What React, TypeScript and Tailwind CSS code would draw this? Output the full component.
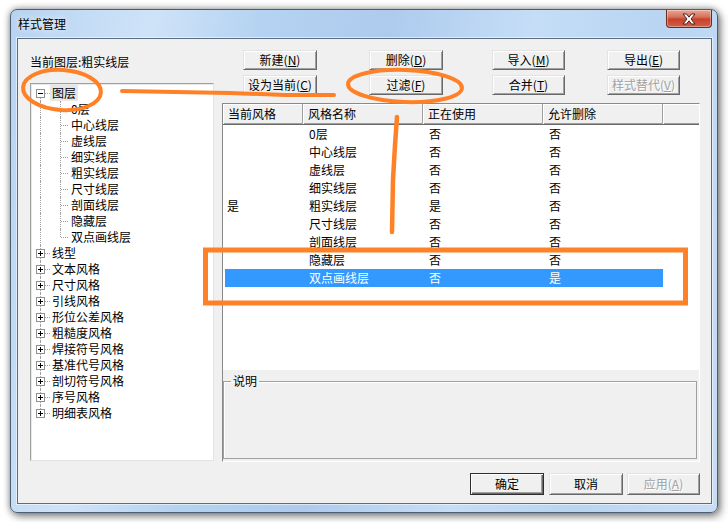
import React from 'react';

const layers = ['0层', '中心线层', '虚线层', '细实线层', '粗实线层', '尺寸线层', '剖面线层', '隐藏层', '双点画线层'];
const roots = ['线型', '文本风格', '尺寸风格', '引线风格', '形位公差风格', '粗糙度风格', '焊接符号风格', '基准代号风格', '剖切符号风格', '序号风格', '明细表风格'];

const rows = [
  { cur: '', name: '0层', used: '否', del: '否' },
  { cur: '', name: '中心线层', used: '否', del: '否' },
  { cur: '', name: '虚线层', used: '否', del: '否' },
  { cur: '', name: '细实线层', used: '否', del: '否' },
  { cur: '是', name: '粗实线层', used: '是', del: '否' },
  { cur: '', name: '尺寸线层', used: '否', del: '否' },
  { cur: '', name: '剖面线层', used: '否', del: '否' },
  { cur: '', name: '隐藏层', used: '否', del: '否' },
  { cur: '', name: '双点画线层', used: '否', del: '是', sel: true },
];

function PlusBox({ open }: { open?: boolean }) {
  return (
    <svg width="9" height="9" viewBox="0 0 9 9" className="block">
      <rect x="0.5" y="0.5" width="8" height="8" fill="#fff" stroke="#919191" />
      <line x1="2" y1="4.5" x2="7" y2="4.5" stroke="#000" />
      {!open && <line x1="4.5" y1="2" x2="4.5" y2="7" stroke="#000" />}
    </svg>
  );
}

function RootRow({ label, first, last, open, selected }: { label: string; first?: boolean; last?: boolean; open?: boolean; selected?: boolean }) {
  return (
    <div className="flex h-4 items-center">
      <div className="relative h-4 w-[19px] shrink-0">
        <span
          className={`absolute left-[9px] w-0 border-l border-dotted border-[#a0a0a0] ${
            first ? 'top-2 bottom-0' : last ? 'top-0 h-2' : 'top-0 bottom-0'
          }`}
        />
        <span className="absolute left-[14px] top-2 w-[5px] border-t border-dotted border-[#a0a0a0]" />
        <span className="absolute left-[5px] top-1">
          <PlusBox open={open} />
        </span>
      </div>
      <span className={`px-[2px] leading-4 ${selected ? 'bg-[#e6e6e6]' : ''}`}>{label}</span>
    </div>
  );
}

function ChildRow({ label, last }: { label: string; last?: boolean }) {
  return (
    <div className="flex h-4 items-center">
      <div className="relative h-4 w-[19px] shrink-0">
        <span className="absolute left-[9px] top-0 bottom-0 w-0 border-l border-dotted border-[#a0a0a0]" />
      </div>
      <div className="relative h-4 w-[19px] shrink-0">
        <span className={`absolute left-[10px] top-0 w-0 border-l border-dotted border-[#a0a0a0] ${last ? 'h-2' : 'bottom-0'}`} />
        <span className="absolute left-[11px] top-2 w-[7px] border-t border-dotted border-[#a0a0a0]" />
      </div>
      <span className="px-[2px] leading-4">{label}</span>
    </div>
  );
}

function Btn({ text, k, disabled, def, className = '' }: { text: string; k?: string; disabled?: boolean; def?: boolean; className?: string }) {
  const frame = def
    ? 'border border-[#2e2e2e] shadow-[inset_1px_1px_0_#fff,inset_-1px_-1px_0_#696969,inset_-2px_-2px_0_#a0a0a0]'
    : 'border border-t-[#e3e3e3] border-l-[#e3e3e3] border-r-[#696969] border-b-[#696969] shadow-[inset_1px_1px_0_#fff,inset_-1px_-1px_0_#a0a0a0]';
  return (
    <div
      className={`flex items-center justify-center bg-[#f0f0f0] text-[12px] leading-4 ${frame} ${
        disabled ? 'text-[#a0a0a0] [text-shadow:1px_1px_0_#fff]' : 'text-black'
      } ${className}`}
    >
      <span>
        {text}
        {k && (
          <>
            (<span className="underline underline-offset-1">{k}</span>)
          </>
        )}
      </span>
    </div>
  );
}

const cols = ['w-[80px]', 'w-[120px]', 'w-[120px]', 'w-[120px]'];

export default function App() {
  return (
    <div className="relative h-[522px] w-[728px] overflow-hidden bg-white pl-[10px] pt-[9px] font-['Noto_Sans_CJK_SC',sans-serif] text-[12px] text-black">
      {/* window */}
      <div className="flex h-[504px] w-[708px] flex-col rounded-[7px] border border-[#4c5e74] bg-[linear-gradient(100deg,#b7d3f1_0%,#cfe3f8_18%,#b4d2f1_32%,#aecbee_48%,#c5ddf6_66%,#b9d5f2_82%,#c9def5_100%)] px-[6px] pr-[5px] shadow-[0_0_7px_rgba(0,0,0,0.45),3px_4px_9px_rgba(0,0,0,0.35)]">
        {/* title bar */}
        <div className="flex h-[28px] shrink-0 items-start">
          <div className="flex h-full flex-1 items-center pl-[1px] text-[12px] text-black [text-shadow:0_0_6px_#fff]">样式管理</div>
          <div className="flex h-[18px] w-[46px] items-center justify-center rounded-b-[4px] border border-t-0 border-[#6e2a22] bg-[linear-gradient(#e9a797_0%,#d7735d_40%,#c8412b_55%,#d0604a_100%)] shadow-[inset_0_0_0_1px_rgba(255,255,255,0.35)]">
            <svg width="14" height="12" viewBox="0 0 14 12">
              <path d="M1 1h3.5L7 4.2 9.5 1H13L9 6l4 5H9.5L7 7.8 4.5 11H1l4-5z" fill="#fff" stroke="#4a2420" strokeWidth="1" strokeLinejoin="round" />
            </svg>
          </div>
        </div>

        {/* client */}
        <div className="flex h-[466px] w-[695px] flex-col border border-[#5c6d82] bg-[#f0f0f0] pl-[12px] pr-[10px] shadow-[0_0_0_1px_rgba(255,255,255,0.55)]">
          <div className="flex gap-[8px]">
            {/* left column */}
            <div className="flex w-[184px] flex-col pt-[15px]">
              <div className="h-4 leading-4">当前图层:粗实线层</div>
              <div className="mt-[13px] h-[378px] border border-t-[#a0a0a0] border-l-[#a0a0a0] border-r-[#e3e3e3] border-b-[#e3e3e3] bg-white pt-[1px] shadow-[inset_1px_1px_0_#e8e8e8]">
                <RootRow label="图层" first open selected />
                {layers.map((l, i) => (
                  <ChildRow key={l} label={l} last={i === layers.length - 1} />
                ))}
                {roots.map((r, i) => (
                  <RootRow key={r} label={r} last={i === roots.length - 1} />
                ))}
              </div>
            </div>

            {/* right column */}
            <div className="flex w-[478px] flex-col pt-[11px]">
              <div className="flex h-[45px]">
                <div className="ml-[21px] flex w-[74px] flex-col gap-[5px]">
                  <Btn text="新建" k="N" className="h-[20px]" />
                  <Btn text="设为当前" k="C" className="h-[20px]" />
                </div>
                <div className="ml-[52px] flex w-[74px] flex-col gap-[5px]">
                  <Btn text="删除" k="D" className="h-[20px]" />
                  <Btn text="过滤" k="F" className="h-[20px]" />
                </div>
                <div className="ml-[49px] flex w-[73px] flex-col gap-[5px]">
                  <Btn text="导入" k="M" className="h-[20px]" />
                  <Btn text="合并" k="T" className="h-[20px]" />
                </div>
                <div className="ml-[42px] flex w-[73px] flex-col gap-[5px]">
                  <Btn text="导出" k="E" className="h-[20px]" />
                  <Btn text="样式替代" k="V" disabled className="h-[20px]" />
                </div>
              </div>

              {/* list + description panel */}
              <div className="mt-[8px] flex h-[359px] flex-col border border-t-[#8a8a8a] border-l-[#8a8a8a] border-r-white border-b-white">
                <div className="h-[266px] bg-white">
                  <div className="flex h-[21px]">
                    {['当前风格', '风格名称', '正在使用', '允许删除'].map((h, i) => (
                      <div
                        key={h}
                        className={`${cols[i]} flex items-center border-r border-b border-r-[#a0a0a0] border-b-[#696969] bg-[#f0f0f0] pl-[5px] shadow-[inset_1px_1px_0_#fff,inset_0_-1px_0_#a0a0a0]`}
                      >
                        {h}
                      </div>
                    ))}
                    <div className="flex-1 border-b border-b-[#696969] bg-[#f0f0f0] shadow-[inset_1px_1px_0_#fff,inset_0_-1px_0_#a0a0a0]" />
                  </div>
                  {rows.map((r) => (
                    <div key={r.name} className={`ml-[2px] flex h-[18px] w-[438px] items-center ${r.sel ? 'bg-[#3399ff] text-white' : ''}`}>
                      <div className="w-[78px] pl-[2px]">{r.cur}</div>
                      <div className="w-[120px] pl-[6px]">{r.name}</div>
                      <div className="w-[120px] pl-[6px]">{r.used}</div>
                      <div className="w-[120px] pl-[6px]">{r.del}</div>
                    </div>
                  ))}
                </div>
                <fieldset className="mt-[3px] mr-[2px] h-[86px] border border-[#a0a0a0] shadow-[inset_1px_1px_0_#fff]">
                  <legend className="ml-[7px] px-[2px] leading-4">说明</legend>
                </fieldset>
              </div>
            </div>
          </div>

          {/* bottom buttons */}
          <div className="mt-[11px] flex justify-end pr-[1px]">
            <Btn text="确定" def className="h-[22px] w-[74px]" />
            <Btn text="取消" className="ml-[5px] h-[22px] w-[74px]" />
            <Btn text="应用" k="A" disabled className="ml-[4px] h-[22px] w-[73px]" />
          </div>
        </div>
      </div>

      {/* hand-drawn annotations */}
      <svg className="pointer-events-none absolute inset-0" width="728" height="522" viewBox="0 0 728 522">
        <g fill="none" stroke="#ff8127" strokeLinecap="round" strokeLinejoin="round">
          <ellipse cx="62" cy="90" rx="39" ry="20" strokeWidth="4" transform="rotate(4 62 90)" />
          <path d="M122 91 L175 92 L230 93 L285 95 L334 95" strokeWidth="4" />
          <ellipse cx="405" cy="86" rx="57" ry="16" strokeWidth="4" transform="rotate(2 405 86)" />
          <path d="M397 117 L395 145 L393 180 L392 232" strokeWidth="4.5" />
          <rect x="205.5" y="250" width="480" height="53" strokeWidth="5" strokeLinecap="butt" strokeLinejoin="miter" />
        </g>
      </svg>
    </div>
  );
}
